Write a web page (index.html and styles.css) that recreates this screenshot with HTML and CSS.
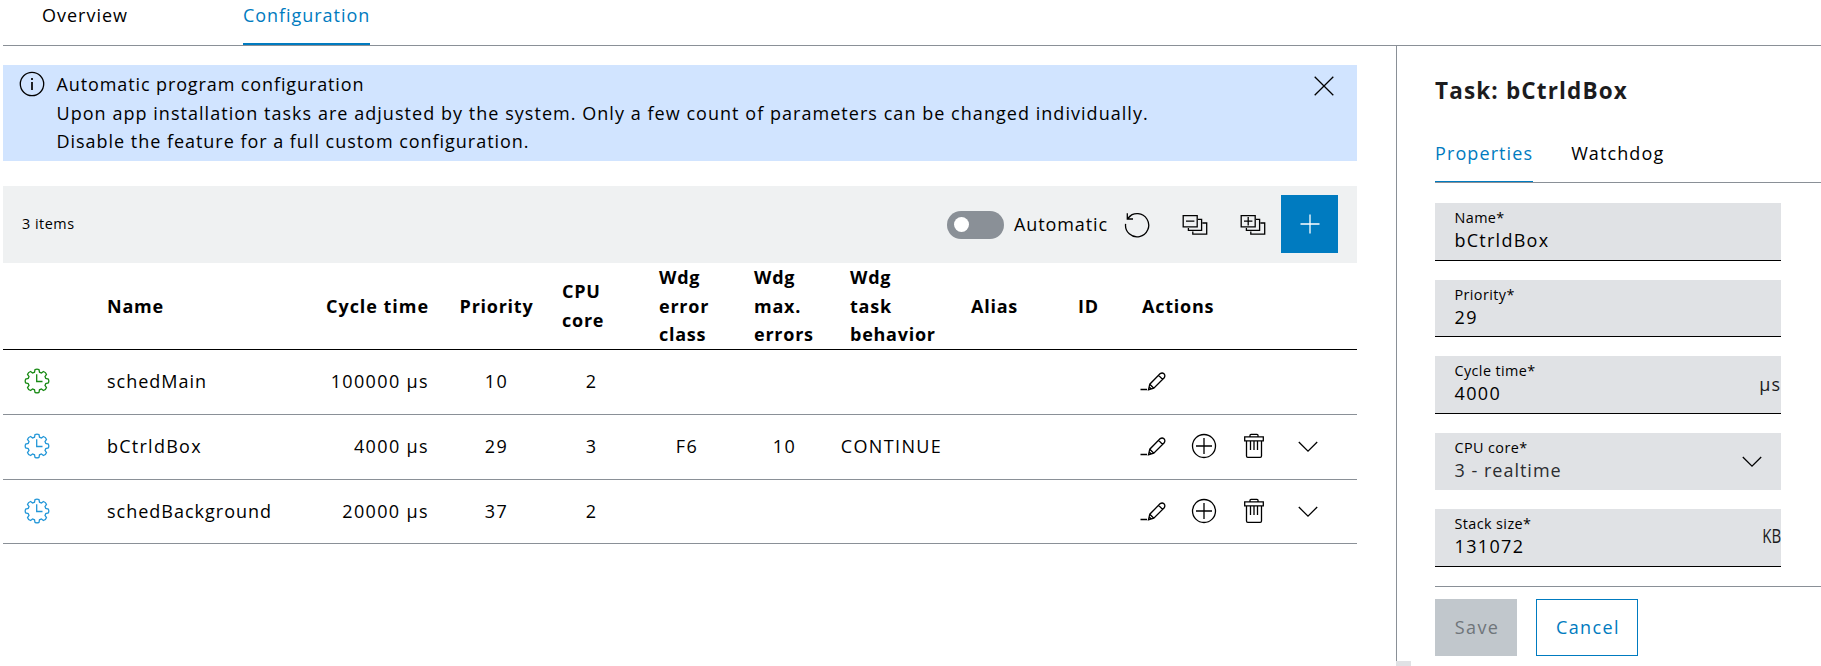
FILE: index.html
```
<!DOCTYPE html>
<html lang="en">
<head>
<meta charset="utf-8">
<title>Task configuration</title>
<link rel="stylesheet" href="styles.css">
</head>
<body>
<svg class="defs" aria-hidden="true">
  <symbol id="gear" viewBox="0 0 26 26"><path d="M10.5 4.2 11 1.7Q13 .7 15 1.7L15.5 4.2 17.4 5 19.5 3.5Q21.8 4.2 22.5 6.5L21 8.6 21.8 10.5 24.3 11Q25.3 13 24.3 15L21.8 15.5 21 17.4 22.5 19.5Q21.8 21.8 19.5 22.5L17.4 21 15.5 21.8 15 24.3Q13 25.3 11 24.3L10.5 21.8 8.6 21 6.5 22.5Q4.2 21.8 3.5 19.5L5 17.4 4.2 15.5 1.7 15Q.7 13 1.7 11L4.2 10.5 5 8.6 3.5 6.5Q4.2 4.2 6.5 3.5L8.6 5ZM12.7 6.2V13.5H18.5"/></symbol>
  <symbol id="edit" viewBox="0 0 26 26"><path d="M.5 21.5H7M8.5 21.7 9.8 16.2 20.2 5.6Q22.3 4.3 24 5.8 25.6 7.6 24.2 9.8L13.8 20.2ZM9.8 16.2 13.8 20.2M18.6 7.4 22.5 11.3M8.5 21.7 9.2 19 11.2 20.9Z"/></symbol>
  <symbol id="add" viewBox="0 0 26 26"><circle cx="13" cy="13" r="11.5"/><path d="M13 5V21M5 13H21"/></symbol>
  <symbol id="trash" viewBox="0 0 26 26"><path d="M3.7 3.8H22.3V7.8H3.7ZM9 3.5V2.3Q9 1.3 10 1.3H16Q17 1.3 17 2.3V3.5M5.5 8V23Q5.5 24.3 6.8 24.3H19.2Q20.5 24.3 20.5 23V8M9.5 8V17M13 8V17M16.5 8V17"/></symbol>
  <symbol id="down" viewBox="0 0 26 26"><path d="M3.8 9 13 18.2 22.2 9"/></symbol>
  <symbol id="reset" viewBox="0 0 26 26"><path d="M1.6 11.8A11.6 11.6 0 1 0 4.2 5.8M3.3 1.3V7H9M3.5 6.8 7.5 3"/></symbol>
  <symbol id="collapse" viewBox="0 0 26 26"><path d="M1.2 3.6H15.2V14.8H1.2ZM4 9.2H12.4M16 7.3H19.6V18.3H6.4V16M20.5 11H24.7V22.2H10.8V19.5"/></symbol>
  <symbol id="expand" viewBox="0 0 26 26"><path d="M1.2 3.6H15.2V14.8H1.2ZM4 9.2H12.4M8.2 5V13.4M16 7.3H19.6V18.3H6.4V16M20.5 11H24.7V22.2H10.8V19.5"/></symbol>
</svg>

<nav class="tabs">
  <a class="tab">Overview</a>
  <a class="tab tab-active">Configuration</a>
</nav>

<div class="layout">
  <main class="main">
    <section class="alert">
      <svg class="icon" viewBox="0 0 26 26"><circle cx="13" cy="13" r="11.7"/><path d="M13 11V19M13 7V9" stroke-width="1.7"/></svg>
      <div class="alert-text"><span class="alert-title">Automatic program configuration</span><br><span class="alert-body">Upon app installation tasks are adjusted by the system. Only a few count of parameters can be changed individually.</span><br>Disable the feature for a full custom configuration.</div>
      <svg class="icon alert-close" viewBox="0 0 26 26"><path d="M3.7 3.7 22.3 22.3M22.3 3.7 3.7 22.3"/></svg>
    </section>

    <section class="toolbar">
      <span class="count">3 items</span>
      <span class="toggle"><span class="knob"></span></span>
      <span class="toggle-label">Automatic</span>
      <div class="tools">
        <svg class="icon"><use href="#reset"/></svg>
        <svg class="icon"><use href="#collapse"/></svg>
        <svg class="icon"><use href="#expand"/></svg>
      </div>
      <button class="create"><svg class="icon" viewBox="0 0 26 26"><path d="M13 3.5V22.5M3.5 13H22.5"/></svg></button>
    </section>

    <section class="table">
      <div class="row head">
        <span></span><span>Name</span><span class="right head-cycle">Cycle time</span><span class="center prio">Priority</span>
        <span class="h17">CPU<br>core</span><span class="h21">Wdg<br>error<br>class</span><span class="h18">Wdg<br>max.<br>errors</span><span class="h17">Wdg<br>task<br>behavior</span>
        <span class="h21">Alias</span><span class="h21">ID</span><span class="h21">Actions</span>
      </div>
      <div class="row">
        <svg class="icon gear gear-green"><use href="#gear"/></svg><span>schedMain</span><span class="right num">100000 µs</span><span class="center num prio">10</span><span class="center num">2</span>
        <span></span><span></span><span></span><span></span><span></span>
        <div class="actions"><svg class="icon"><use href="#edit"/></svg></div>
      </div>
      <div class="row">
        <svg class="icon gear"><use href="#gear"/></svg><span class="box-name">bCtrldBox</span><span class="right num">4000 µs</span><span class="center num prio">29</span><span class="center num">3</span>
        <span class="center num">F6</span><span class="center num">10</span><span class="center num">CONTINUE</span><span></span><span></span>
        <div class="actions"><svg class="icon"><use href="#edit"/></svg><svg class="icon"><use href="#add"/></svg><svg class="icon"><use href="#trash"/></svg><svg class="icon"><use href="#down"/></svg></div>
      </div>
      <div class="row last">
        <svg class="icon gear"><use href="#gear"/></svg><span>schedBackground</span><span class="right num">20000 µs</span><span class="center num prio">37</span><span class="center num">2</span>
        <span></span><span></span><span></span><span></span><span></span>
        <div class="actions"><svg class="icon"><use href="#edit"/></svg><svg class="icon"><use href="#add"/></svg><svg class="icon"><use href="#trash"/></svg><svg class="icon"><use href="#down"/></svg></div>
      </div>
    </section>
  </main>

  <div class="divider"><div class="divider-line"></div><div class="divider-end"></div></div>

  <aside class="panel">
    <h2 class="title">Task: bCtrldBox</h2>
    <nav class="subtabs"><a class="subtab subtab-active">Properties</a><a class="subtab">Watchdog</a></nav>
    <form class="fields">
      <div class="field"><div><div class="label">Name*</div><div class="value box-name">bCtrldBox</div></div></div>
      <div class="field"><div><div class="label">Priority*</div><div class="value num">29</div></div></div>
      <div class="field"><div><div class="label">Cycle time*</div><div class="value num">4000</div></div><span class="unit">µs</span></div>
      <div class="field select"><div><div class="label">CPU core*</div><div class="value">3 - realtime</div></div><svg class="icon"><use href="#down"/></svg></div>
      <div class="field"><div><div class="label">Stack size*</div><div class="value num">131072</div></div><span class="unit narrow">KB</span></div>
    </form>
    <footer class="footer"><button class="btn save">Save</button><button class="btn cancel">Cancel</button></footer>
  </aside>
</div>
</body>
</html>
```
FILE: styles.css
```
* { box-sizing: border-box; }
body {
  margin: 0;
  height: 666px;
  overflow: hidden;
  background: #fff;
  color: #000;
  font: 18px/28.5px "Open Sans", "Noto Sans", sans-serif;
  letter-spacing: 1px;
}
.defs { display: none; }
.icon {
  display: block;
  flex: none;
  width: 26px;
  height: 26px;
  fill: none;
  stroke: currentColor;
  stroke-width: 1.3;
}
button { font: inherit; letter-spacing: inherit; padding: 0; border: 0; border-radius: 0; }

.tabs {
  display: flex;
  gap: 115px;
  height: 46px;
  margin-left: 3px;
  padding-left: 39px;
  border-bottom: 1px solid #8a9097;
}
.tab { height: 45px; padding-top: 1px; }
.tab-active { color: #007bc0; border-bottom: 2px solid #007bc0; letter-spacing: .95px; }

.layout { display: flex; height: 620px; }
.main { width: 1354px; margin-left: 3px; padding-top: 19px; flex: none; }

.alert {
  display: flex;
  height: 96px;
  padding: 5px 20px 0 16px;
  background: #d1e4ff;
}
.alert > .icon { margin-top: 1px; }
.alert-text { flex: 1; margin-left: 11.5px; white-space: nowrap; letter-spacing: .97px; }
.alert-title { letter-spacing: .89px; }
.alert-body { letter-spacing: 1.04px; }
.alert > .alert-close { margin-top: 3px; }

.toolbar {
  display: flex;
  align-items: center;
  height: 77px;
  margin-top: 25px;
  padding: 0 19px;
  background: #eff1f2;
}
.count { flex: 1; font-size: 14.4px; letter-spacing: .5px; }
.toggle {
  display: flex;
  align-items: center;
  width: 57px;
  height: 28px;
  padding-left: 7px;
  border-radius: 14px;
  background: #8a9097;
}
.knob { width: 15px; height: 15px; border-radius: 50%; background: #fff; }
.toggle-label { width: 110px; padding-left: 10px; letter-spacing: .9px; }
.tools { display: flex; gap: 32px; width: 167px; padding-left: 9.5px; }
.create {
  display: grid;
  place-items: center;
  width: 57px;
  height: 58px;
  margin-bottom: 1px;
  background: #007bc0;
  color: #fff;
}

.row {
  display: grid;
  grid-template-columns: 104px 201px 121px 115px 93px 98px 97px 117px 107px 64px 1fr;
  align-items: center;
  height: 65px;
  padding-bottom: 2px;
  border-bottom: 1px solid #8a9097;
}
.row.head { height: 87px; padding: 0 0 1px; border-color: #000; font-weight: 700; letter-spacing: .75px; }
.row.last { height: 64px; padding-bottom: 1px; }
.num { letter-spacing: 1.36px; }
.right { text-align: right; }
.center { text-align: center; }
.row .prio { padding-left: 20px; }
.row .head-cycle { letter-spacing: .96px; }
.row > .center:nth-child(n+5) { padding-left: 2px; }
.h17 { padding-left: 18px; }
.h18 { padding-left: 19px; }
.h21 { padding-left: 22px; }
.gear { margin-left: 21px; color: #2397d8; }
.gear-green { color: #188a14; }
.box-name { letter-spacing: 1.25px; }
.actions { display: flex; padding-left: 20px; }
.actions .icon:nth-child(2) { margin-left: 25px; }
.actions .icon:nth-child(3) { margin-left: 24px; }
.actions .icon:nth-child(4) { margin-left: 28px; }

.divider { width: 15px; margin-left: 39px; flex: none; }
.divider-line { height: 615px; border-left: 1px solid #8a9097; }
.divider-end { height: 5px; background: #e0e2e5; }

.panel { flex: 1; margin-left: 24px; display: flex; flex-direction: column; }
.title { margin: 30px 0 0; font-size: 22.5px; line-height: 30px; letter-spacing: 1.15px; color: #1c1c1e; white-space: nowrap; }
.subtabs { display: flex; gap: 38px; height: 61px; margin-top: 16px; border-bottom: 1px solid #8a9097; }
.subtab { height: 60px; padding-top: 17px; letter-spacing: 1.1px; }
.subtab-active { color: #007bc0; border-bottom: 1px solid #007bc0; }

.fields { display: flex; flex-direction: column; gap: 19px; margin-top: 20px; }
.field {
  display: flex;
  justify-content: space-between;
  width: 346px;
  height: 57.5px;
  padding: 5px 0 0 19.5px;
  background: #e0e2e5;
  border-bottom: 1px solid #000;
}
.field.select { border-bottom-color: #e0e2e5; padding-right: 16px; }
.field .icon { margin-top: 10px; }
.label { font-size: 14.4px; line-height: 20px; letter-spacing: .4px; }
.value { line-height: 25px; }
.select .value { color: #2b2d30; }
.unit { line-height: 28px; margin-top: 9px; color: #1c1c1e; }
.narrow { margin-top: 8px; font-size: 20px; letter-spacing: 0; transform: scaleX(.75); transform-origin: right; }

.footer { display: flex; gap: 19px; margin-top: 19px; padding-top: 12px; border-top: 1px solid #8a9097; }
.btn { width: 82px; height: 57px; letter-spacing: 1.4px; }
.save { background: #c1c7cc; color: #6f757a; padding-left: 2px; }
.cancel { width: 102px; background: #fff; color: #007bc0; border: 1px solid #007bc0; padding-left: 2px; }
```
